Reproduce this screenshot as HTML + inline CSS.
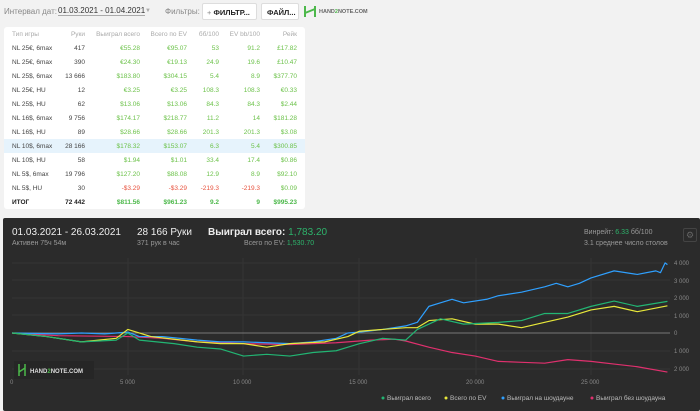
<!DOCTYPE html>
<html><head><meta charset="utf-8"><style>
*{margin:0;padding:0;box-sizing:border-box}
body{width:700px;height:411px;background:#f2f2f2;font-family:"Liberation Sans","DejaVu Sans",sans-serif;position:relative;overflow:hidden;color:#333}
.a{position:absolute;white-space:nowrap}
table{position:absolute;left:4px;top:27px;width:301px;background:#fff;border-collapse:collapse;font-size:6.5px;border-radius:3px;table-layout:fixed}
td{height:14px;padding:0;text-align:right;color:#6cc24a;white-space:nowrap;overflow:visible}
td:first-child{text-align:left;padding-left:8px;color:#444}
td:nth-child(2){color:#444}
tr.h td{color:#aaa;height:14px}
tr.hl td{background:#e6f3fc}
td.r{color:#e8533f}
td:last-child{padding-right:8px}
tr.t td{font-weight:bold;color:#222}
tr.t td.g{color:#4cb84a}
.dark{position:absolute;left:3px;top:218px;width:697px;height:193px;background:#2b2b2b;border-radius:2px}
.w{color:#eee}.s{color:#999}.gr{color:#2db36b}
</style></head><body>
<div class="a" style="left:4px;top:7px;font-size:8px;color:#888">Интервал дат:</div>
<div class="a" style="left:58px;top:6px;font-size:8px;color:#333;border-bottom:1px solid #aaa">01.03.2021 - 01.04.2021</div>
<div class="a" style="left:145px;top:8px;font-size:6px;color:#aaa">▼</div>
<div class="a" style="left:165px;top:7px;font-size:8px;color:#888">Фильтры:</div>
<div class="a" style="left:202px;top:3px;width:55px;height:17px;background:#fff;border:1px solid #ddd;border-radius:2px;font-size:7.5px;color:#222;font-weight:bold;padding:4px 0 0 4px"><span style="color:#888;font-weight:normal">+</span> ФИЛЬТР...</div>
<div class="a" style="left:261px;top:3px;width:38px;height:17px;background:#fff;border:1px solid #ddd;border-radius:2px;font-size:7.5px;color:#222;font-weight:bold;padding:4px 0 0 5px">ФАЙЛ...</div>
<svg class="a" style="left:303px;top:5px" width="14" height="13"><path d="M2 1V12M12 1V12M2 8L12 4" stroke="#4cb84a" stroke-width="2" fill="none"/></svg>
<div class="a" style="left:319px;top:9px;font-size:5.5px;font-weight:bold;color:#666">HAND<span style="color:#4cb84a">2</span>NOTE.COM</div>
<table>
<colgroup><col style="width:52px"><col style="width:29px"><col style="width:55px"><col style="width:47px"><col style="width:32px"><col style="width:41px"><col style="width:45px"></colgroup>
<tr class="h"><td>Тип игры</td><td>Руки</td><td>Выиграл всего</td><td>Всего по EV</td><td>бб/100</td><td>EV bb/100</td><td>Рейк</td></tr>
<tr><td>NL 25€, 6max</td><td>417</td><td>€55.28</td><td>€95.07</td><td>53</td><td>91.2</td><td>£17.82</td></tr>
<tr><td>NL 25€, 6max</td><td>390</td><td>€24.30</td><td>€19.13</td><td>24.9</td><td>19.6</td><td>£10.47</td></tr>
<tr><td>NL 25$, 6max</td><td>13 666</td><td>$183.80</td><td>$304.15</td><td>5.4</td><td>8.9</td><td>$377.70</td></tr>
<tr><td>NL 25€, HU</td><td>12</td><td>€3.25</td><td>€3.25</td><td>108.3</td><td>108.3</td><td>€0.33</td></tr>
<tr><td>NL 25$, HU</td><td>62</td><td>$13.06</td><td>$13.06</td><td>84.3</td><td>84.3</td><td>$2.44</td></tr>
<tr><td>NL 16$, 6max</td><td>9 756</td><td>$174.17</td><td>$218.77</td><td>11.2</td><td>14</td><td>$181.28</td></tr>
<tr><td>NL 16$, HU</td><td>89</td><td>$28.66</td><td>$28.66</td><td>201.3</td><td>201.3</td><td>$3.08</td></tr>
<tr class="hl"><td>NL 10$, 6max</td><td>28 166</td><td>$178.32</td><td>$153.07</td><td>6.3</td><td>5.4</td><td>$300.85</td></tr>
<tr><td>NL 10$, HU</td><td>58</td><td>$1.94</td><td>$1.01</td><td>33.4</td><td>17.4</td><td>$0.86</td></tr>
<tr><td>NL 5$, 6max</td><td>19 796</td><td>$127.20</td><td>$88.08</td><td>12.9</td><td>8.9</td><td>$92.10</td></tr>
<tr><td>NL 5$, HU</td><td>30</td><td class="r">-$3.29</td><td class="r">-$3.29</td><td class="r">-219.3</td><td class="r">-219.3</td><td>$0.09</td></tr>
<tr class="t"><td>ИТОГ</td><td>72 442</td><td class="g">$811.56</td><td class="g">$961.23</td><td class="g">9.2</td><td class="g">9</td><td class="g">$995.23</td></tr>
</table>
<div class="dark"></div>
<div class="a w" style="left:12px;top:227px;font-size:10px">01.03.2021 - 26.03.2021</div>
<div class="a s" style="left:12px;top:240px;font-size:7px">Активен 75ч 54м</div>
<div class="a w" style="left:137px;top:227px;font-size:10px">28 166 Руки</div>
<div class="a s" style="left:137px;top:240px;font-size:7px">371 рук в час</div>
<div class="a w" style="left:208px;top:227px;font-size:10px;font-weight:bold">Выиграл всего: <span class="gr" style="font-weight:normal">1,783.20</span></div>
<div class="a s" style="left:244px;top:240px;font-size:7px">Всего по EV: <span class="gr">1,530.70</span></div>
<div class="a s" style="left:584px;top:229px;font-size:7px">Винрейт: <span class="gr">6.33</span> бб/100</div>
<div class="a s" style="left:584px;top:240px;font-size:7px">3.1 среднее число столов</div>
<div class="a" style="left:683px;top:228px;width:14px;height:14px;border:1px solid #444;border-radius:2px;color:#666;font-size:9px;text-align:center;line-height:12px">⚙</div>
<svg class="a" style="left:0;top:0" width="700" height="411">
<g stroke="#353535" stroke-width="1">
<line x1="12" y1="263" x2="670" y2="263"/><line x1="12" y1="280" x2="670" y2="280"/><line x1="12" y1="298" x2="670" y2="298"/><line x1="12" y1="315" x2="670" y2="315"/><line x1="12" y1="351" x2="670" y2="351"/><line x1="12" y1="369" x2="670" y2="369"/>
<line x1="128" y1="258" x2="128" y2="375"/><line x1="243" y1="258" x2="243" y2="375"/><line x1="359" y1="258" x2="359" y2="375"/><line x1="476" y1="258" x2="476" y2="375"/><line x1="591" y1="258" x2="591" y2="375"/>
</g>
<line x1="12" y1="333" x2="670" y2="333" stroke="#777" stroke-width="1"/>
<g font-size="6" fill="#888" font-family="Liberation Sans,sans-serif">
<text x="674" y="265">4 000</text><text x="674" y="283">3 000</text><text x="674" y="300">2 000</text><text x="674" y="318">1 000</text><text x="674" y="335">0</text><text x="674" y="353">1 000</text><text x="674" y="371">2 000</text>
<text x="10" y="384">0</text><text x="120" y="384">5 000</text><text x="233" y="384">10 000</text><text x="349" y="384">15 000</text><text x="466" y="384">20 000</text><text x="581" y="384">25 000</text>
</g>
<g transform="translate(12,333) scale(0.02316,-0.01775)" fill="none" stroke-width="1.2" stroke-linejoin="round">
<polyline vector-effect="non-scaling-stroke" stroke="#e0306e" points="0,0 2000,-150 5000,-200 6500,-300 8000,-500 10000,-600 12000,-650 14000,-550 15500,-400 16500,-350 17000,-450 18000,-800 19000,-1100 20000,-1300 21000,-1600 22000,-1650 23000,-1700 24000,-1500 25000,-1600 26000,-1750 27000,-1900 28300,-2200"/>
<polyline vector-effect="non-scaling-stroke" stroke="#2fa0ff" points="0,0 2000,-50 3000,0 4000,-50 5000,50 5500,-200 6500,-200 8000,-400 9000,-500 10000,-500 12000,-600 13000,-500 14000,-300 14500,0 15000,50 16000,200 17000,400 17500,600 18000,1500 18500,1700 19000,1900 19500,1700 20500,1900 21000,2100 22000,2300 23000,2600 23500,2800 24000,2600 24500,2800 25000,3100 26000,3500 27000,3300 27800,3500 28000,3400 28200,3950 28300,3850"/>
<polyline vector-effect="non-scaling-stroke" stroke="#e8e83a" points="0,0 1500,-200 3000,-500 4500,-300 5000,200 6000,-200 8000,-500 9000,-600 10000,-600 11000,-800 12000,-600 13500,-500 14500,-200 15000,100 16000,200 17000,300 17500,300 18000,700 19000,800 20000,500 21000,500 22000,300 23000,600 24000,900 25000,1300 26000,1500 27000,1200 28300,1530"/>
<polyline vector-effect="non-scaling-stroke" stroke="#22b573" points="0,0 1500,-200 3000,-500 4500,-400 5000,0 5500,-400 7000,-600 8000,-800 9000,-900 10000,-1300 11000,-1200 12000,-1300 13000,-1100 14000,-1000 14500,-800 15000,-600 16000,-300 17000,-400 17500,200 18500,800 19500,500 21000,600 22000,700 23000,1100 24000,1100 25000,1500 26000,1800 27000,1500 28300,1783"/>
</g>
<rect x="14" y="361" width="80" height="18" fill="#262626"/>
<path d="M19 364V376M25 364V376M19 372L25 368" stroke="#4cb84a" stroke-width="1.5" fill="none"/>
<text x="30" y="373" font-size="6" font-weight="bold" fill="#ddd" font-family="Liberation Sans,sans-serif">HAND<tspan fill="#4cb84a">2</tspan>NOTE.COM</text>
<g font-size="6.5" fill="#bbb" font-family="Liberation Sans,sans-serif">
<circle cx="383" cy="398" r="1.5" fill="#22b573"/><text x="387" y="400">Выиграл всего</text>
<circle cx="446" cy="398" r="1.5" fill="#e8e83a"/><text x="450" y="400">Всего по EV</text>
<circle cx="503" cy="398" r="1.5" fill="#2fa0ff"/><text x="507" y="400">Выиграл на шоудауне</text>
<circle cx="592" cy="398" r="1.5" fill="#e0306e"/><text x="596" y="400">Выиграл без шоудауна</text>
</g>
</svg>
</body></html>
